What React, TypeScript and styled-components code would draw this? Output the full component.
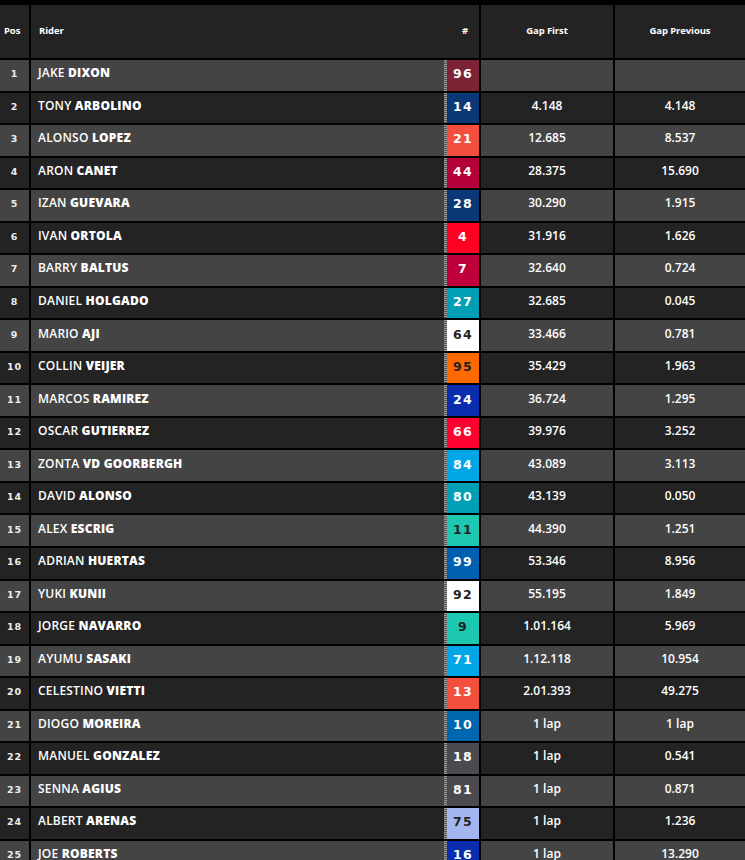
import styled, { createGlobalStyle } from "styled-components";

const GlobalStyle = createGlobalStyle`
  html, body {
    margin: 0;
    padding: 0;
    background: #000;
  }
  body {
    font-family: "Open Sans", "Liberation Sans", sans-serif;
  }
`;

type Rider = {
  pos: number;
  first: string;
  last: string;
  num: number;
  color: string;
  dark?: boolean;
  gapFirst: string;
  gapPrev: string;
};

const riders: Rider[] = [
  { pos: 1, first: "JAKE", last: "DIXON", num: 96, color: "#7c2336", gapFirst: "", gapPrev: "" },
  { pos: 2, first: "TONY", last: "ARBOLINO", num: 14, color: "#0b3977", gapFirst: "4.148", gapPrev: "4.148" },
  { pos: 3, first: "ALONSO", last: "LOPEZ", num: 21, color: "#f44f3e", gapFirst: "12.685", gapPrev: "8.537" },
  { pos: 4, first: "ARON", last: "CANET", num: 44, color: "#b5003a", gapFirst: "28.375", gapPrev: "15.690" },
  { pos: 5, first: "IZAN", last: "GUEVARA", num: 28, color: "#0b3977", gapFirst: "30.290", gapPrev: "1.915" },
  { pos: 6, first: "IVAN", last: "ORTOLA", num: 4, color: "#ff0022", gapFirst: "31.916", gapPrev: "1.626" },
  { pos: 7, first: "BARRY", last: "BALTUS", num: 7, color: "#c0003a", gapFirst: "32.640", gapPrev: "0.724" },
  { pos: 8, first: "DANIEL", last: "HOLGADO", num: 27, color: "#009fb6", gapFirst: "32.685", gapPrev: "0.045" },
  { pos: 9, first: "MARIO", last: "AJI", num: 64, color: "#ffffff", dark: true, gapFirst: "33.466", gapPrev: "0.781" },
  { pos: 10, first: "COLLIN", last: "VEIJER", num: 95, color: "#ff6a00", dark: true, gapFirst: "35.429", gapPrev: "1.963" },
  { pos: 11, first: "MARCOS", last: "RAMIREZ", num: 24, color: "#0a2db0", gapFirst: "36.724", gapPrev: "1.295" },
  { pos: 12, first: "OSCAR", last: "GUTIERREZ", num: 66, color: "#ff0030", gapFirst: "39.976", gapPrev: "3.252" },
  { pos: 13, first: "ZONTA", last: "VD GOORBERGH", num: 84, color: "#00a6e6", gapFirst: "43.089", gapPrev: "3.113" },
  { pos: 14, first: "DAVID", last: "ALONSO", num: 80, color: "#009fb6", gapFirst: "43.139", gapPrev: "0.050" },
  { pos: 15, first: "ALEX", last: "ESCRIG", num: 11, color: "#1cc8b0", dark: true, gapFirst: "44.390", gapPrev: "1.251" },
  { pos: 16, first: "ADRIAN", last: "HUERTAS", num: 99, color: "#005fae", gapFirst: "53.346", gapPrev: "8.956" },
  { pos: 17, first: "YUKI", last: "KUNII", num: 92, color: "#ffffff", dark: true, gapFirst: "55.195", gapPrev: "1.849" },
  { pos: 18, first: "JORGE", last: "NAVARRO", num: 9, color: "#1cc8b0", dark: true, gapFirst: "1.01.164", gapPrev: "5.969" },
  { pos: 19, first: "AYUMU", last: "SASAKI", num: 71, color: "#00a6e6", gapFirst: "1.12.118", gapPrev: "10.954" },
  { pos: 20, first: "CELESTINO", last: "VIETTI", num: 13, color: "#f44f3e", gapFirst: "2.01.393", gapPrev: "49.275" },
  { pos: 21, first: "DIOGO", last: "MOREIRA", num: 10, color: "#0066ae", gapFirst: "1 lap", gapPrev: "1 lap" },
  { pos: 22, first: "MANUEL", last: "GONZALEZ", num: 18, color: "#4a4a4f", gapFirst: "1 lap", gapPrev: "0.541" },
  { pos: 23, first: "SENNA", last: "AGIUS", num: 81, color: "#4a4a4f", gapFirst: "1 lap", gapPrev: "0.871" },
  { pos: 24, first: "ALBERT", last: "ARENAS", num: 75, color: "#a3b6f0", dark: true, gapFirst: "1 lap", gapPrev: "1.236" },
  { pos: 25, first: "JOE", last: "ROBERTS", num: 16, color: "#0a2db0", gapFirst: "1 lap", gapPrev: "13.290" },
];

const Table = styled.div`
  display: grid;
  grid-template-columns: 29px 1fr 132px 130px;
  grid-template-rows: 53px;
  grid-auto-rows: 30.54px;
  gap: 2px;
  padding-top: 5px;
  background: #000;
  width: 745px;
  height: 860px;
  overflow: hidden;
  color: #fff;
`;

const HeadCell = styled.div<{ $align?: "left" | "center" }>`
  background: #232323;
  display: flex;
  align-items: center;
  justify-content: ${(p) => (p.$align === "left" ? "flex-start" : "center")};
  padding-left: ${(p) => (p.$align === "left" ? "8px" : "0")};
  padding-bottom: 2px;
  box-sizing: border-box;
  font-size: 9.5px;
  font-weight: 700;
  letter-spacing: -0.1px;
`;

const RiderHead = styled(HeadCell)`
  justify-content: space-between;
  padding-right: 11px;
`;

const PosHead = styled(HeadCell)`
  padding-left: 4px;
`;

const Cell = styled.div<{ $odd: boolean }>`
  background: ${(p) => (p.$odd ? "#444444" : "#232323")};
  display: flex;
  align-items: center;
  font-size: 12px;
  padding-bottom: 5px;
  box-sizing: border-box;
`;

const PosCell = styled(Cell)`
  justify-content: center;
  padding-bottom: 3px;
  font-family: "DejaVu Sans", sans-serif;
  font-weight: 700;
  font-size: 9.5px;
  letter-spacing: 1px;
  color: #eee;
`;

const RiderCell = styled(Cell)`
  justify-content: space-between;
  padding-left: 7px;
`;

const Name = styled.span`
  font-weight: 600;
  letter-spacing: 0.2px;
  text-transform: uppercase;
  b {
    font-weight: 800;
  }
`;

const NumBox = styled.div<{ $bg: string; $dark?: boolean }>`
  width: 32px;
  align-self: stretch;
  margin-bottom: -5px;
  padding-bottom: 3px;
  box-sizing: border-box;
  flex-shrink: 0;
  display: flex;
  align-items: center;
  justify-content: center;
  background: ${(p) => p.$bg};
  color: ${(p) => (p.$dark ? "#222" : "#fff")};
  font-family: "DejaVu Sans", sans-serif;
  font-weight: 700;
  font-size: 12.5px;
  letter-spacing: 1.2px;
  position: relative;
  &::before {
    content: "";
    position: absolute;
    left: -3px;
    top: 0;
    bottom: 0;
    width: 3px;
    background: repeating-linear-gradient(
      to bottom,
      #9a9a9a 0 1px,
      #555 1px 2px
    );
  }
`;

const GapCell = styled(Cell)`
  justify-content: center;
  font-weight: 600;
  font-size: 12px;
  letter-spacing: 0;
`;

const App = () => {
  return (
    <>
      <GlobalStyle />
      <Table>
        <PosHead $align="left">Pos</PosHead>
        <RiderHead $align="left">
          <span>Rider</span>
          <span>#</span>
        </RiderHead>
        <HeadCell>Gap First</HeadCell>
        <HeadCell>Gap Previous</HeadCell>
        {riders.map((r) => {
          const odd = r.pos % 2 === 1;
          return [
            <PosCell key={`p${r.pos}`} $odd={odd}>
              {r.pos}
            </PosCell>,
            <RiderCell key={`r${r.pos}`} $odd={odd}>
              <Name>
                {r.first} <b>{r.last}</b>
              </Name>
              <NumBox $bg={r.color} $dark={r.dark}>
                {r.num}
              </NumBox>
            </RiderCell>,
            <GapCell key={`g${r.pos}`} $odd={odd}>
              {r.gapFirst}
            </GapCell>,
            <GapCell key={`q${r.pos}`} $odd={odd}>
              {r.gapPrev}
            </GapCell>,
          ];
        })}
      </Table>
    </>
  );
};

export default App;
